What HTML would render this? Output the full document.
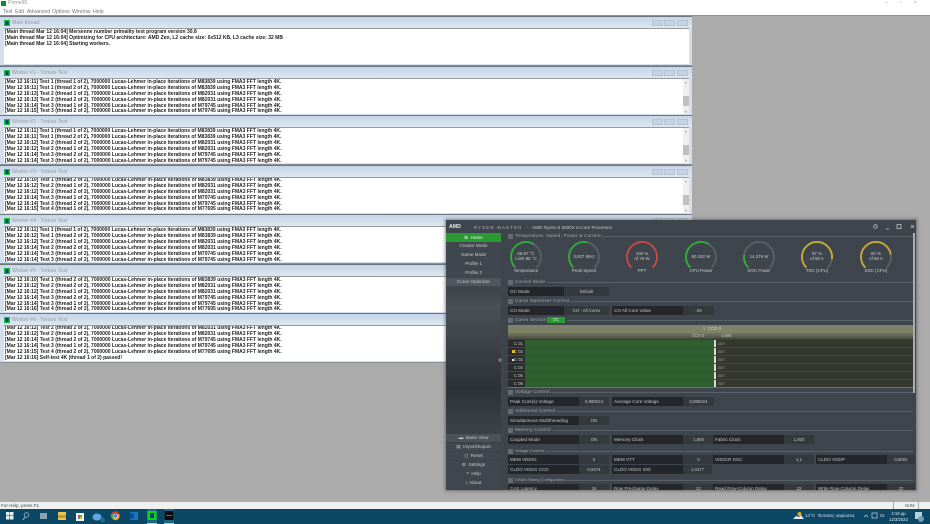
<!DOCTYPE html>
<html><head><meta charset="utf-8"><style>
html,body{margin:0;padding:0;width:930px;height:524px;overflow:hidden;background:#ababab;font-family:"Liberation Sans","DejaVu Sans",sans-serif}
div,span{position:absolute;white-space:nowrap;box-sizing:border-box}
#top{left:0;top:0;width:930px;height:16px;background:#fff;border-bottom:1px solid #8e8e8e}
.ttl{color:#8c8c8c;font-size:5.2px}
.win{left:0;width:692px;height:50px;background:#d3dfea;border-top:1px solid #6f7780;border-bottom:1px solid #8a9098}
.bar{left:0;top:0;width:692px;height:11px;background:linear-gradient(#c6d5e6,#dce7f1)}
.body{left:4px;top:11px;width:685px;height:36px;background:#fff;border-top:1px solid #9a9a9a;overflow:hidden}
.ic{left:4px;top:3px;width:6px;height:6px;background:#0a8f2f;box-shadow:inset 0 0 0 1px #16c23c}
.ic:after{content:"";position:absolute;left:2px;top:1px;width:2px;height:4px;background:#0b3f9a}
.wt{left:12px;top:3px;color:#9a9a9a;font-size:5.2px}
.btn{top:3px;width:11px;height:6px;background:#c5d3e2;border:1px solid #b6c4d3}
.l{left:1px;color:#222;font-size:5px;font-weight:bold;line-height:6px}
.sb{left:679px;top:0;width:6px;height:36px;background:#f0f0f0}
.th{left:0;top:17px;width:6px;height:10px;background:#c0c0c0}
.ar{left:0;width:6px;text-align:center;color:#555;font-size:4px;line-height:5px}
#rm{left:446px;top:220px;width:470px;height:270px;background:#3f454c;box-shadow:0 0 3px 1px rgba(60,60,60,.55);overflow:hidden}
#side{left:0;top:0;width:55px;height:270px;background:linear-gradient(#3f454c 0,#3f454c 26%,#4a5057 32%,#2d3237 62%,#3c4147 78%,#3f454c 100%)}
.m{left:0;width:55px;height:8.4px;background:#41474e;color:#c8cbce;font-size:4.6px;line-height:8.4px;text-align:center}
.hd{left:62px;height:6px;color:#a6aaae;font-size:4.6px;line-height:6px;letter-spacing:.22px;padding-left:7px}
.hd:before{content:"";position:absolute;left:0;top:.5px;width:5px;height:5px;background:#666c73}
.hs{font-size:3.9px;letter-spacing:.05px}
.rule{height:1px;background:#5a6067;right:3px}
.f{height:9px;background:#23272b;border-radius:1px;overflow:hidden}
.fl{left:2px;top:0;color:#c3c6c9;font-size:4.6px;line-height:9px}
.fv{top:0;bottom:0;background:#34393e;color:#c3c6c9;font-size:4.3px;line-height:9px;text-align:center}
.g{color:#c9ccce;font-size:4.4px;text-align:center;width:50px}
.core{left:62px;width:407px;height:7px;background:#35382f}
.cl{left:0;top:0;width:17px;height:7px;background:#2a2d2c;color:#c4c6c8;font-size:4.4px;line-height:7px;text-align:right;padding-right:2px}
.cb{left:17px;top:0;width:189px;height:7px;background:#2f5f2f}
.ct{left:206px;top:0;width:2px;height:7px;background:#d8dcd4}
.cv{left:209px;top:0;color:#a9ab9f;font-size:4px;line-height:7px}
#status{left:0;top:502px;width:930px;height:7px;background:#f0f0f0;color:#444;font-size:4.6px;line-height:7px;padding-left:1px}
#task{left:0;top:509px;width:930px;height:15px;background:#0d4766}
.t{top:3px;width:8px;height:8px}
</style></head><body>
<div id="top"></div>
<div style="left:1px;top:1px;width:5px;height:5px;background:#0a8f2f"></div>
<div class="ttl" style="left:8px;top:0;line-height:7px;color:#999">Prime95</div>
<div class="ttl" style="left:3px;top:9px;line-height:6px;color:#777">Test</div>
<div class="ttl" style="left:15px;top:9px;line-height:6px;color:#777">Edit</div>
<div class="ttl" style="left:27px;top:9px;line-height:6px;color:#777">Advanced</div>
<div class="ttl" style="left:52px;top:9px;line-height:6px;color:#777">Options</div>
<div class="ttl" style="left:72px;top:9px;line-height:6px;color:#777">Window</div>
<div class="ttl" style="left:93px;top:9px;line-height:6px;color:#777">Help</div>
<div class="ttl" style="left:885px;top:0;line-height:7px;letter-spacing:12px;color:#aaa">–▫×</div>

<div class="win" style="top:16px"><div class="bar"></div><div class="ic"></div><div class="wt">Main thread</div>
<div class="btn" style="left:652px"></div><div class="btn" style="left:664px"></div><div class="btn" style="left:677px"></div>
<div class="body" style="left:4px;width:685px">
<div class="l" style="top:0">[Main thread Mar 12 16:04] Mersenne number primality test program version 30.8</div>
<div class="l" style="top:6px">[Main thread Mar 12 16:04] Optimizing for CPU architecture: AMD Zen, L2 cache size: 6x512 KB, L3 cache size: 32 MB</div>
<div class="l" style="top:12px">[Main thread Mar 12 16:04] Starting workers.</div>
</div></div>

<div class="win" style="top:65.5px"><div class="bar"></div><div class="ic"></div><div class="wt">Worker #1 - Torture Test</div>
<div class="btn" style="left:652px"></div><div class="btn" style="left:664px"></div><div class="btn" style="left:677px"></div>
<div class="body">
<div class="l" style="top:0">[Mar 12 16:11] Test 1 (thread 1 of 2), 7000000 Lucas-Lehmer in-place iterations of M83839 using FMA3 FFT length 4K.</div>
<div class="l" style="top:6px">[Mar 12 16:11] Test 1 (thread 2 of 2), 7000000 Lucas-Lehmer in-place iterations of M83839 using FMA3 FFT length 4K.</div>
<div class="l" style="top:12px">[Mar 12 16:13] Test 2 (thread 1 of 2), 7000000 Lucas-Lehmer in-place iterations of M82031 using FMA3 FFT length 4K.</div>
<div class="l" style="top:18px">[Mar 12 16:13] Test 2 (thread 2 of 2), 7000000 Lucas-Lehmer in-place iterations of M82031 using FMA3 FFT length 4K.</div>
<div class="l" style="top:24px">[Mar 12 16:14] Test 3 (thread 1 of 2), 7000000 Lucas-Lehmer in-place iterations of M79745 using FMA3 FFT length 4K.</div>
<div class="l" style="top:29.5px">[Mar 12 16:15] Test 3 (thread 2 of 2), 7000000 Lucas-Lehmer in-place iterations of M79745 using FMA3 FFT length 4K.</div>
<div class="sb"><div class="th"></div><div class="ar" style="top:1px">˄</div><div class="ar" style="top:30px">˅</div></div>
</div></div>

<div class="win" style="top:115px"><div class="bar"></div><div class="ic"></div><div class="wt">Worker #2 - Torture Test</div>
<div class="btn" style="left:652px"></div><div class="btn" style="left:664px"></div><div class="btn" style="left:677px"></div>
<div class="body">
<div class="l" style="top:0">[Mar 12 16:11] Test 1 (thread 1 of 2), 7000000 Lucas-Lehmer in-place iterations of M83839 using FMA3 FFT length 4K.</div>
<div class="l" style="top:6px">[Mar 12 16:11] Test 1 (thread 2 of 2), 7000000 Lucas-Lehmer in-place iterations of M83839 using FMA3 FFT length 4K.</div>
<div class="l" style="top:12px">[Mar 12 16:12] Test 2 (thread 2 of 2), 7000000 Lucas-Lehmer in-place iterations of M82031 using FMA3 FFT length 4K.</div>
<div class="l" style="top:18px">[Mar 12 16:12] Test 2 (thread 1 of 2), 7000000 Lucas-Lehmer in-place iterations of M82031 using FMA3 FFT length 4K.</div>
<div class="l" style="top:24px">[Mar 12 16:14] Test 3 (thread 2 of 2), 7000000 Lucas-Lehmer in-place iterations of M79745 using FMA3 FFT length 4K.</div>
<div class="l" style="top:29.5px">[Mar 12 16:14] Test 3 (thread 1 of 2), 7000000 Lucas-Lehmer in-place iterations of M79745 using FMA3 FFT length 4K.</div>
<div class="sb"><div class="th"></div><div class="ar" style="top:1px">˄</div><div class="ar" style="top:30px">˅</div></div>
</div></div>

<div class="win" style="top:164.5px"><div class="bar"></div><div class="ic"></div><div class="wt">Worker #3 - Torture Test</div>
<div class="btn" style="left:652px"></div><div class="btn" style="left:664px"></div><div class="btn" style="left:677px"></div>
<div class="body">
<div class="l" style="top:-1px">[Mar 12 16:10] Test 1 (thread 2 of 2), 7000000 Lucas-Lehmer in-place iterations of M83839 using FMA3 FFT length 4K.</div>
<div class="l" style="top:5px">[Mar 12 16:12] Test 2 (thread 1 of 2), 7000000 Lucas-Lehmer in-place iterations of M82031 using FMA3 FFT length 4K.</div>
<div class="l" style="top:11px">[Mar 12 16:12] Test 2 (thread 2 of 2), 7000000 Lucas-Lehmer in-place iterations of M82031 using FMA3 FFT length 4K.</div>
<div class="l" style="top:17px">[Mar 12 16:14] Test 3 (thread 1 of 2), 7000000 Lucas-Lehmer in-place iterations of M79745 using FMA3 FFT length 4K.</div>
<div class="l" style="top:23px">[Mar 12 16:14] Test 3 (thread 2 of 2), 7000000 Lucas-Lehmer in-place iterations of M79745 using FMA3 FFT length 4K.</div>
<div class="l" style="top:28.5px">[Mar 12 16:15] Test 4 (thread 1 of 2), 7000000 Lucas-Lehmer in-place iterations of M77695 using FMA3 FFT length 4K.</div>
<div class="sb"><div class="th"></div><div class="ar" style="top:1px">˄</div><div class="ar" style="top:30px">˅</div></div>
</div></div>

<div class="win" style="top:214px"><div class="bar"></div><div class="ic"></div><div class="wt">Worker #4 - Torture Test</div>
<div class="btn" style="left:652px"></div><div class="btn" style="left:664px"></div><div class="btn" style="left:677px"></div>
<div class="body">
<div class="l" style="top:0">[Mar 12 16:11] Test 1 (thread 1 of 2), 7000000 Lucas-Lehmer in-place iterations of M83839 using FMA3 FFT length 4K.</div>
<div class="l" style="top:6px">[Mar 12 16:12] Test 1 (thread 2 of 2), 7000000 Lucas-Lehmer in-place iterations of M83839 using FMA3 FFT length 4K.</div>
<div class="l" style="top:12px">[Mar 12 16:12] Test 2 (thread 1 of 2), 7000000 Lucas-Lehmer in-place iterations of M82031 using FMA3 FFT length 4K.</div>
<div class="l" style="top:18px">[Mar 12 16:14] Test 2 (thread 2 of 2), 7000000 Lucas-Lehmer in-place iterations of M82031 using FMA3 FFT length 4K.</div>
<div class="l" style="top:24px">[Mar 12 16:14] Test 3 (thread 1 of 2), 7000000 Lucas-Lehmer in-place iterations of M79745 using FMA3 FFT length 4K.</div>
<div class="l" style="top:29.5px">[Mar 12 16:14] Test 3 (thread 2 of 2), 7000000 Lucas-Lehmer in-place iterations of M79745 using FMA3 FFT length 4K.</div>
<div class="sb"><div class="th"></div><div class="ar" style="top:1px">˄</div><div class="ar" style="top:30px">˅</div></div>
</div></div>

<div class="win" style="top:263.5px"><div class="bar"></div><div class="ic"></div><div class="wt">Worker #5 - Torture Test</div>
<div class="btn" style="left:652px"></div><div class="btn" style="left:664px"></div><div class="btn" style="left:677px"></div>
<div class="body">
<div class="l" style="top:0">[Mar 12 16:10] Test 1 (thread 2 of 2), 7000000 Lucas-Lehmer in-place iterations of M83839 using FMA3 FFT length 4K.</div>
<div class="l" style="top:6px">[Mar 12 16:12] Test 2 (thread 2 of 2), 7000000 Lucas-Lehmer in-place iterations of M82031 using FMA3 FFT length 4K.</div>
<div class="l" style="top:12px">[Mar 12 16:12] Test 2 (thread 1 of 2), 7000000 Lucas-Lehmer in-place iterations of M82031 using FMA3 FFT length 4K.</div>
<div class="l" style="top:18px">[Mar 12 16:14] Test 3 (thread 2 of 2), 7000000 Lucas-Lehmer in-place iterations of M79745 using FMA3 FFT length 4K.</div>
<div class="l" style="top:24px">[Mar 12 16:14] Test 3 (thread 1 of 2), 7000000 Lucas-Lehmer in-place iterations of M79745 using FMA3 FFT length 4K.</div>
<div class="l" style="top:29.5px">[Mar 12 16:16] Test 4 (thread 2 of 2), 7000000 Lucas-Lehmer in-place iterations of M77695 using FMA3 FFT length 4K.</div>
<div class="sb"><div class="th"></div><div class="ar" style="top:1px">˄</div><div class="ar" style="top:30px">˅</div></div>
</div></div>

<div class="win" style="top:313px"><div class="bar"></div><div class="ic"></div><div class="wt">Worker #6 - Torture Test</div>
<div class="btn" style="left:652px"></div><div class="btn" style="left:664px"></div><div class="btn" style="left:677px"></div>
<div class="body">
<div class="l" style="top:-1px">[Mar 12 16:12] Test 2 (thread 2 of 2), 7000000 Lucas-Lehmer in-place iterations of M82031 using FMA3 FFT length 4K.</div>
<div class="l" style="top:5px">[Mar 12 16:12] Test 2 (thread 1 of 2), 7000000 Lucas-Lehmer in-place iterations of M82031 using FMA3 FFT length 4K.</div>
<div class="l" style="top:11px">[Mar 12 16:14] Test 3 (thread 2 of 2), 7000000 Lucas-Lehmer in-place iterations of M79745 using FMA3 FFT length 4K.</div>
<div class="l" style="top:17px">[Mar 12 16:14] Test 3 (thread 1 of 2), 7000000 Lucas-Lehmer in-place iterations of M79745 using FMA3 FFT length 4K.</div>
<div class="l" style="top:23px">[Mar 12 16:15] Test 4 (thread 2 of 2), 7000000 Lucas-Lehmer in-place iterations of M77695 using FMA3 FFT length 4K.</div>
<div class="l" style="top:28.5px">[Mar 12 16:16] Self-test 4K (thread 1 of 2) passed!</div>
</div></div>

<div id="rm">
<div id="side"></div>
<div style="left:3px;top:3.500px;color:#e8e8e8;font-size:5.2px;font-weight:bold;line-height:7px">AMD</div>
<div style="left:28px;top:3.500px;color:#b8babc;font-size:4.3px;line-height:7px;letter-spacing:1.25px">RYZEN MASTER</div>
<div style="left:81px;top:3.500px;color:#c8cacc;font-size:4.6px;line-height:7px">-</div>
<div style="left:86px;top:3.500px;color:#c8cacc;font-size:4.6px;line-height:7px">AMD Ryzen 5 5600X 6-Core Processor</div>
<svg style="position:absolute;left:0;top:0" width="470" height="270">
<g fill="none" stroke="#bfc3c6" stroke-width=".8"><circle cx="429.500" cy="6.500" r="1.800"/><path d="M440 9h3"/><rect x="451" y="4.500" width="4" height="4"/><path d="M465 5l3 3M468 5l-3 3"/></g>
<g fill="none" stroke-width="1.900">
<g stroke="#5a5f65">
<path pathLength="100" d="M69.400 47.600A15 15 0 1 1 90.600 47.600"/>
<path pathLength="100" d="M127.400 47.600A15 15 0 1 1 148.600 47.600"/>
<path pathLength="100" d="M244.400 47.600A15 15 0 1 1 265.600 47.600"/>
<path pathLength="100" d="M302.400 47.600A15 15 0 1 1 323.600 47.600"/>
<path pathLength="100" d="M360.400 47.600A15 15 0 1 1 381.600 47.600"/>
<path pathLength="100" d="M419.400 47.600A15 15 0 1 1 440.600 47.600"/>
</g>
<path stroke="#33a83d" pathLength="100" stroke-dasharray="62 100" d="M69.400 47.600A15 15 0 1 1 90.600 47.600"/>
<path stroke="#33a83d" pathLength="100" stroke-dasharray="55 100" d="M127.400 47.600A15 15 0 1 1 148.600 47.600"/>
<path stroke="#c94a44" d="M185.400 47.600A15 15 0 1 1 206.600 47.600"/>
<path stroke="#33a83d" pathLength="100" stroke-dasharray="62 100" d="M244.400 47.600A15 15 0 1 1 265.600 47.600"/>
<path stroke="#33a83d" pathLength="100" stroke-dasharray="20 100" d="M302.400 47.600A15 15 0 1 1 323.600 47.600"/>
<path stroke="#c9a83a" pathLength="100" stroke-dasharray="87 100" d="M360.400 47.600A15 15 0 1 1 381.600 47.600"/>
<path stroke="#c9a83a" pathLength="100" stroke-dasharray="80 100" d="M419.400 47.600A15 15 0 1 1 440.600 47.600"/>
</g></svg>
<div class="g" style="left:55px;top:31px">66.97 °C<br>Limit 95 °C</div>
<div class="g" style="left:113px;top:34px">3,927 MHz</div>
<div class="g" style="left:171px;top:31px">100 %<br>of 76 W</div>
<div class="g" style="left:230px;top:34px">50.192 W</div>
<div class="g" style="left:288px;top:34px">14.379 W</div>
<div class="g" style="left:346px;top:31px">87 %<br>of 60 A</div>
<div class="g" style="left:405px;top:31px">80 %<br>of 90 A</div>
<div class="g" style="left:55px;top:48px">Temperature</div>
<div class="g" style="left:113px;top:48px">Peak Speed</div>
<div class="g" style="left:171px;top:48px">PPT</div>
<div class="g" style="left:230px;top:48px">CPU Power</div>
<div class="g" style="left:288px;top:48px">SOC Power</div>
<div class="g" style="left:346px;top:48px">TDC (CPU)</div>
<div class="g" style="left:405px;top:48px">EDC (CPU)</div>

<div class="hd" style="top:13px">Temperature, Speed, Power &amp; Current</div><div class="rule" style="left:156px;top:16px"></div>
<div class="hd" style="top:59px">Control Mode</div><div class="rule" style="left:101px;top:62px"></div>
<div class="hd" style="top:78px">Curve Optimizer Control</div><div class="rule" style="left:124px;top:81px"></div>
<div class="hd" style="top:97px">Cores Section</div><div class="rule" style="left:121px;top:100px"></div>
<div style="left:101px;top:97px;width:18px;height:6px;background:#2c9a34;color:#d8e8d8;font-size:4.4px;line-height:6px;text-align:center">OC</div>
<div class="hd" style="top:169px">Voltage Control</div><div class="rule" style="left:104px;top:172px"></div>
<div class="hd" style="top:188px">Additional Control</div><div class="rule" style="left:111px;top:191px"></div>
<div class="hd" style="top:207px">Memory Control</div><div class="rule" style="left:107px;top:210px"></div>
<div class="hd hs" style="top:228px">Voltage Controls</div><div class="rule" style="left:99px;top:231px"></div>
<div class="hd hs" style="top:257px">DRAM Timing Configuration</div><div class="rule" style="left:119px;top:260px"></div>

<div class="f" style="left:62px;top:67px;width:101px"><div class="fl">OC Mode</div><div class="fv" style="left:56px;right:0">Default</div></div>
<div class="f" style="left:62px;top:86px;width:101px"><div class="fl">CO Mode</div><div class="fv" style="left:56px;right:0">CO - All Cores</div></div>
<div class="f" style="left:166px;top:86px;width:102px"><div class="fl">CO All Core Value</div><div class="fv" style="left:71px;right:0">-29</div></div>

<div style="left:62px;top:105px;width:407px;height:8px;background:#7e8268"></div>
<div style="left:62px;top:113px;width:407px;height:6px;background:linear-gradient(#75795f,#474b42)"></div>
<div style="left:257px;top:105px;color:#d8dacb;font-size:4.4px;line-height:8px">˅ &nbsp;CCD 0</div>
<div style="left:246px;top:113px;color:#c9cbc0;font-size:4.2px;line-height:6px">CCX 0</div>
<div style="left:275px;top:113px;color:#c9cbc0;font-size:4.2px;line-height:6px">4,600</div>
<div style="left:62px;top:119px;width:407px;height:2px;background:#3a3d35"></div>

<div class="core" style="top:120px"><div class="cl">C 01</div><div class="cb"></div><div class="ct"></div><div class="cv">-927</div></div>
<div class="core" style="top:128px"><div class="cl">C 02</div><div class="cb"></div><div class="ct"></div><div class="cv">-927</div><div style="left:4px;top:2px;width:3px;height:3px;background:#e8b820"></div></div>
<div class="core" style="top:136px"><div class="cl">C 03</div><div class="cb"></div><div class="ct"></div><div class="cv">-927</div><div style="left:4px;top:2.500px;width:2px;height:2px;background:#e0e0e0"></div></div>
<div class="core" style="top:144px"><div class="cl">C 04</div><div class="cb"></div><div class="ct"></div><div class="cv">-927</div></div>
<div class="core" style="top:152px"><div class="cl">C 05</div><div class="cb"></div><div class="ct"></div><div class="cv">-927</div></div>
<div class="core" style="top:160px"><div class="cl">C 06</div><div class="cb"></div><div class="ct"></div><div class="cv">-927</div></div>
<div style="left:62px;top:167px;width:407px;height:1px;background:#6d7261"></div>
<div style="left:467px;top:13px;width:2px;height:160px;background:#a9adb0"></div>

<div class="f" style="left:62px;top:177px;width:101px"><div class="fl">Peak Core(s) Voltage</div><div class="fv" style="left:71px;right:0">0,999224</div></div>
<div class="f" style="left:166px;top:177px;width:102px"><div class="fl">Average Core Voltage</div><div class="fv" style="left:71px;right:0">0,899224</div></div>
<div class="f" style="left:62px;top:196px;width:101px"><div class="fl">Simultaneous Multithreading</div><div class="fv" style="left:71px;right:0">ON</div></div>
<div class="f" style="left:62px;top:215px;width:101px"><div class="fl">Coupled Mode</div><div class="fv" style="left:71px;right:0">ON</div></div>
<div class="f" style="left:166px;top:215px;width:102px"><div class="fl">Memory Clock</div><div class="fv" style="left:71px;right:0">1,800</div></div>
<div class="f" style="left:267px;top:215px;width:101px"><div class="fl">Fabric Clock</div><div class="fv" style="left:71px;right:0">1,800</div></div>

<div class="f" style="left:62px;top:235px;width:101px"><div class="fl">MEM VDDIO</div><div class="fv" style="left:71px;right:0">0</div></div>
<div class="f" style="left:166px;top:235px;width:102px"><div class="fl">MEM VTT</div><div class="fv" style="left:71px;right:0">0</div></div>
<div class="f" style="left:267px;top:235px;width:101px"><div class="fl">VDDCR SOC</div><div class="fv" style="left:71px;right:0">1,1</div></div>
<div class="f" style="left:370px;top:235px;width:99px"><div class="fl">CLDO VDDP</div><div class="fv" style="left:71px;right:0">0,9002</div></div>
<div class="f" style="left:62px;top:244.500px;width:101px"><div class="fl">CLDO VDDG CCD</div><div class="fv" style="left:71px;right:0">0,9474</div></div>
<div class="f" style="left:166px;top:244.500px;width:100px"><div class="fl">CLDO VDDG IOD</div><div class="fv" style="left:71px;right:0">1,0477</div></div>
<div class="f" style="left:62px;top:264px;width:101px"><div class="fl">CAS Latency</div><div class="fv" style="left:71px;right:0">16</div></div>
<div class="f" style="left:166px;top:264px;width:102px"><div class="fl">Row Precharge Delay</div><div class="fv" style="left:71px;right:0">22</div></div>
<div class="f" style="left:267px;top:264px;width:101px"><div class="fl">Read Row-Column Delay</div><div class="fv" style="left:71px;right:0">22</div></div>
<div class="f" style="left:370px;top:264px;width:99px"><div class="fl">Write Row-Column Delay</div><div class="fv" style="left:71px;right:0">22</div></div>

<div class="m" style="top:13px;height:9px;background:#2c9a34;color:#e6f2e6;line-height:9px">✿ &nbsp;Home</div>
<div class="m" style="top:22px">Creator Mode</div>
<div class="m" style="top:31px">Game Mode</div>
<div class="m" style="top:40px">Profile 1</div>
<div class="m" style="top:49px">Profile 2</div>
<div class="m" style="top:58px;background:#50565d">Curve Optimizer</div>
<div style="left:52px;top:137px;color:#cfd2d4;font-size:7px;line-height:7px">«</div>
<div class="m" style="top:214px;background:#4c5259">▬ &nbsp;Basic View</div>
<div class="m" style="top:223px">▤ &nbsp;Import/Export</div>
<div class="m" style="top:232px">◻ &nbsp;Reset</div>
<div class="m" style="top:241px">⚙ &nbsp;Settings</div>
<div class="m" style="top:250px">? &nbsp;Help</div>
<div class="m" style="top:259px">i &nbsp;About</div>
</div>

<div id="status">For Help, press F1
<div style="left:893px;top:0;width:1px;height:7px;background:#aaa"></div>
<div style="left:905px;top:0;color:#555;font-size:4.2px;line-height:7px">NUM</div>
<div style="left:918px;top:0;width:1px;height:7px;background:#aaa"></div></div>

<div id="task">
<svg style="position:absolute;left:0;top:0" width="930" height="15">
<g fill="#e8f0f4"><rect x="6" y="3" width="3.500" height="3.500"/><rect x="10" y="3" width="3.500" height="3.500"/><rect x="6" y="7" width="3.500" height="3.500"/><rect x="10" y="7" width="3.500" height="3.500"/></g>
<circle cx="26.500" cy="6" r="2.300" fill="none" stroke="#9fb6c2" stroke-width=".8"/><path d="M25 8l-2 3" stroke="#9fb6c2"/>
<rect x="40" y="4" width="7" height="6" fill="#8aa6b5"/>
<rect x="58" y="3" width="8" height="8" fill="#e8c35a"/><rect x="58" y="6" width="8" height="3" fill="#c79a2e"/>
<rect x="76" y="4" width="8" height="8" fill="#f4f4f4"/><rect x="78" y="6" width="2" height="2" fill="#e04a2a"/><rect x="80" y="6" width="2" height="2" fill="#5ab030"/><rect x="78" y="8" width="2" height="2" fill="#2a8fd8"/><rect x="80" y="8" width="2" height="2" fill="#f0b020"/>
<ellipse cx="97" cy="8" rx="4.500" ry="3.500" fill="#5aa8e0"/><circle cx="102.500" cy="11" r="2.500" fill="#1f6a8f"/>
<circle cx="115.500" cy="7" r="4.200" fill="#d9a62a"/><path d="M115.500 7L111.500 4.500A4.500 4.500 0 0 1 119.500 5Z" fill="#d8382c"/><path d="M115.500 7L112 10A4.500 4.500 0 0 1 111.500 4.500Z" fill="#3fa34a"/><circle cx="115.500" cy="7" r="2" fill="#3c7fd8" stroke="#fff" stroke-width=".6"/>
<rect x="130" y="3" width="8" height="8" fill="#1677c9"/><rect x="130" y="4.500" width="4" height="5" fill="#0b4f8f"/>
<rect x="147" y="0" width="10" height="15" fill="#1a6685"/><rect x="147" y="14" width="10" height="1" fill="#9fd0e4"/><rect x="147.500" y="2" width="9" height="9" fill="#07d70c"/><rect x="150" y="4" width="4" height="5" fill="#0a3f8a"/>
<rect x="164" y="0" width="10" height="15" fill="#1a6685"/><rect x="164" y="14" width="10" height="1" fill="#9fd0e4"/><rect x="164.500" y="2" width="9" height="9" fill="#0b0b0b"/><path d="M166 6.500h6" stroke="#c8452a"/>
<path d="M793 10l3-3 3 1 2-2 3 4z" fill="#e6e9ec"/><circle cx="799.500" cy="5" r="2" fill="#e8a82a"/>
<path d="M864 8l2-2 2 2" fill="none" stroke="#c9d6dd" stroke-width=".7"/>
<rect x="872" y="4" width="5" height="5" fill="none" stroke="#c9d6dd" stroke-width=".7"/>
<rect x="915" y="3" width="7" height="7" fill="#b9cfdb"/><circle cx="921" cy="10" r="3" fill="#6f9fbd"/>
</svg>
<div style="left:805px;top:0;color:#d6e2e8;font-size:4.6px;line-height:14px">14°C &nbsp;Έντονες νεφώσεις</div>
<div style="left:880px;top:0;color:#d6e2e8;font-size:4.4px;line-height:14px">Gr</div>
<div style="left:889px;top:2px;color:#e4ecf0;font-size:4.2px;line-height:5.500px;text-align:center;width:19px">4:19 μμ<br>12/3/2023</div>
</div>
</body></html>
